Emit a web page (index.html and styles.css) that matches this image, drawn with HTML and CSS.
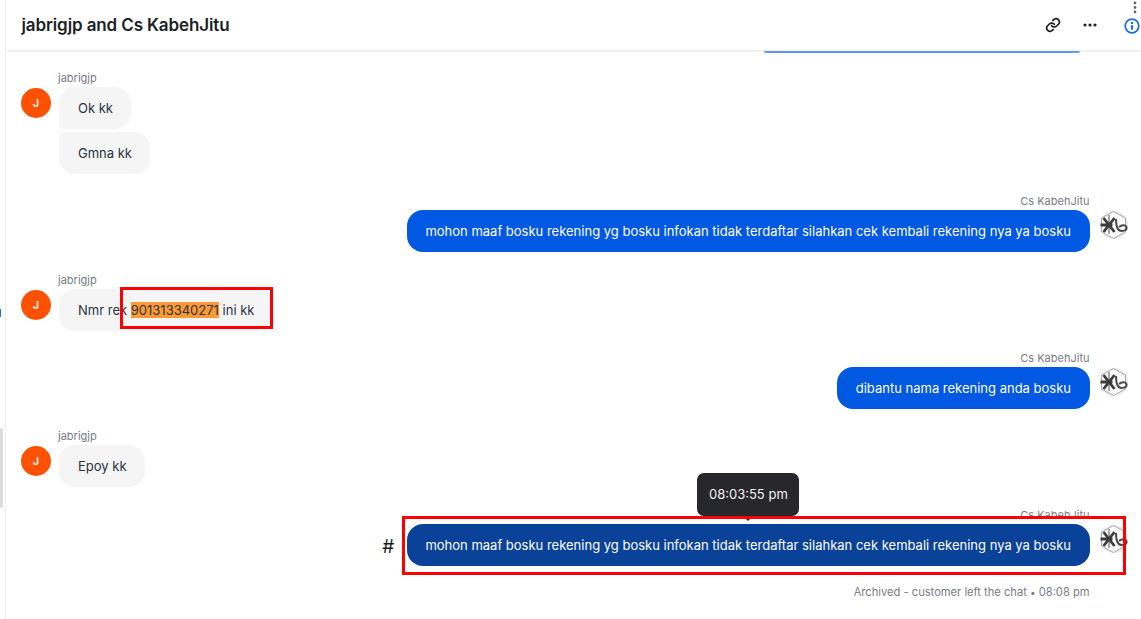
FILE: index.html
```html
<!DOCTYPE html>
<html lang="en">
<head>
<meta charset="utf-8">
<title>Conversation</title>
<link rel="stylesheet" href="styles.css">
</head>
<body>
<svg class="defs" width="0" height="0" aria-hidden="true">
  <symbol id="kb" viewBox="0 0 30 30">
    <circle cx="15" cy="15" r="14" fill="#ececec"/>
    <path d="M14.500 1.500 26.500 8v14l-12 6.500L2.500 22V8z" fill="#fbfbfb" stroke="#a8a8a8" stroke-width="1"/>
    <path d="M10 5v19" fill="none" stroke="#888" stroke-width="1.500"/>
    <path d="M4.500 8l11 14M15.500 8l-11 14M1.500 15h12" fill="none" stroke="#3c3c3c" stroke-width="2.800"/>
    <path d="M17 9c0 7 1 12 5.500 12s5.500-1.800 5-3.800-4-3-7.500-.2" fill="none" stroke="#4a4a4a" stroke-width="2"/>
  </symbol>
</svg>
<div class="app">
  <div class="rail"><i class="rail-tick"></i><i class="rail-thumb"></i></div>
  <main class="chat">
    <header class="topbar">
      <h1 class="title">jabrigjp and Cs KabehJitu</h1>
      <div class="actions">
        <svg class="icon-link" viewBox="0 0 24 24" fill="none" stroke="#222" stroke-width="2.600" stroke-linecap="round" stroke-linejoin="round"><path d="M10 13a5 5 0 0 0 7.500.5l3-3a5 5 0 0 0-7-7l-1.700 1.700"/><path d="M14 11a5 5 0 0 0-7.500-.5l-3 3a5 5 0 0 0 7 7l1.700-1.700"/></svg>
        <svg class="icon-more" viewBox="0 0 14 4" fill="#222"><circle cx="2" cy="2" r="1.600"/><circle cx="7" cy="2" r="1.600"/><circle cx="12" cy="2" r="1.600"/></svg>
        <div class="info-col">
          <svg class="icon-kebab" viewBox="0 0 4 12" fill="#666"><circle cx="2" cy="1.500" r="1.400"/><circle cx="2" cy="6" r="1.400"/><circle cx="2" cy="10.500" r="1.400"/></svg>
          <svg class="icon-info" viewBox="0 0 16 16" fill="none"><circle cx="8" cy="8" r="6.800" stroke="#1a6fe0" stroke-width="1.700"/><circle cx="8" cy="4.900" r="1.200" fill="#1a6fe0"/><path d="M8 7.200v4.500" stroke="#1a6fe0" stroke-width="2.100"/></svg>
        </div>
      </div>
    </header>
    <section class="thread">
      <div class="prev-bubble"></div>

      <article class="msg in first">
        <div class="avatar">J</div>
        <div class="stack">
          <div class="name">jabrigjp</div>
          <div class="bubble group-top">Ok kk</div>
          <div class="bubble group-end">Gmna kk</div>
        </div>
      </article>

      <article class="msg out gap-s">
        <div class="stack">
          <div class="name">Cs KabehJitu</div>
          <div class="bubble">mohon maaf bosku rekening yg bosku infokan tidak terdaftar silahkan cek kembali rekening nya ya bosku</div>
        </div>
        <svg class="logo"><use href="#kb"/></svg>
      </article>

      <article class="msg in gap-l">
        <div class="avatar">J</div>
        <div class="stack">
          <div class="name">jabrigjp</div>
          <div class="bubble">Nmr rek <mark class="hl">901313340271</mark> ini kk</div>
        </div>
      </article>

      <article class="msg out gap-s">
        <div class="stack">
          <div class="name">Cs KabehJitu</div>
          <div class="bubble">dibantu nama rekening anda bosku</div>
        </div>
        <svg class="logo"><use href="#kb"/></svg>
      </article>

      <article class="msg in gap-s">
        <div class="avatar">J</div>
        <div class="stack">
          <div class="name">jabrigjp</div>
          <div class="bubble">Epoy kk</div>
        </div>
      </article>

      <article class="msg out gap-l">
        <span class="hash">#</span>
        <div class="stack">
          <div class="name">Cs KabehJitu</div>
          <div class="bubble hovered">mohon maaf bosku rekening yg bosku infokan tidak terdaftar silahkan cek kembali rekening nya ya bosku
            <div class="tooltip">08:03:55 pm</div>
          </div>
          <div class="status">Archived - customer left the chat <span class="dot">•</span> 08:08 pm</div>
        </div>
        <svg class="logo"><use href="#kb"/></svg>
      </article>
    </section>
  </main>
  <div class="mark-box mark-one"></div>
  <div class="mark-box mark-two"></div>
</div>
</body>
</html>
```
FILE: styles.css
```css
* { box-sizing: border-box; }
html, body { margin: 0; height: 100%; overflow: hidden; background: #fff; }
body { font-family: Inter, "Liberation Sans", sans-serif; color: #1f2933; }
.defs { position: absolute; }
.app { position: relative; display: flex; width: 1141px; height: 619px; overflow: hidden; }

.rail { position: relative; flex: 0 0 6px; border-right: 1px solid #efefef; }
.rail-tick { position: absolute; left: 0; top: 309px; width: 1px; height: 8px; background: #1a6fe0; }
.rail-thumb { position: absolute; left: 0; top: 428px; width: 3px; height: 80px; background: #dcdcdc; border-radius: 0 3px 3px 0; }

.chat { flex: 1; min-width: 0; display: flex; flex-direction: column; }
.topbar { flex: 0 0 50px; display: flex; align-items: center; justify-content: space-between; padding-left: 15.5px; border-bottom: 2px solid #f1f1f1; }
.title { margin: 0; font-size: 17px; line-height: 22px; font-weight: 600; color: #1b1f27; letter-spacing: -0.12px; }
.actions { display: flex; align-items: center; }
.icon-link { width: 16px; height: 16px; margin-right: 22px; }
.icon-more { width: 14px; height: 4px; margin-right: 27px; }
.info-col { display: flex; flex-direction: column; align-items: flex-start; width: 16px; height: 50px; margin-right: 1px; padding-top: 1px; }
.icon-kebab { width: 4px; height: 13px; margin-left: 9px; }
.icon-info { width: 16px; height: 16px; margin-top: 4px; }

.thread { flex: 1; display: flex; flex-direction: column; padding: 0 12.5px 0 15px; margin-top: -1px; }
.prev-bubble { align-self: flex-end; width: 316px; height: 2px; margin-right: 48.500px; background: #5f98ee; border-radius: 0 0 8px 8px; }

.msg { display: flex; align-items: flex-start; }
.msg.first { margin-top: 19px; }
.msg.gap-s { margin-top: 21px; }
.msg.gap-l { margin-top: 22px; }
.msg.out { justify-content: flex-end; }

.stack { display: flex; flex-direction: column; align-items: flex-start; gap: 3px; }
.name { font-size: 11px; line-height: 13px; margin: 0 0 -1px -1px; color: #767c86; }
.out .stack { align-items: flex-end; }
.out .name { margin-right: 0; }

.avatar { flex: 0 0 30px; width: 30px; height: 30px; margin: 16px 8px 0 0; border-radius: 50%; background: #ff5100; color: #fff; font-size: 11px; font-weight: 600; display: flex; align-items: center; justify-content: center; }
.logo { flex: 0 0 30px; width: 30px; height: 30px; margin: 15px 0 0 9px; }

.bubble { position: relative; padding: 12px 18.500px; font-size: 13px; line-height: 18px; border-radius: 16px; background: #f5f5f5; color: #2a3342; }
.in .bubble { padding: 12px 18px 12px 19px; }
.bubble.group-top { border-bottom-left-radius: 4px; }
.bubble.group-end { border-top-left-radius: 4px; }
.out .bubble { background: #0058e3; color: #fff; }
.out .bubble.hovered { background: #0a429a; }

.hl { background: #ff9933; color: #2a3342; }
.hash { font-size: 19px; font-weight: 400; line-height: 24px; margin: 26px 12.500px 0 0; color: #1c1c1c; }

.tooltip { position: absolute; left: 290.500px; top: -51px; width: 102px; height: 43px; line-height: 43px; text-align: center; font-size: 13px; border-radius: 7px; background: #27272c; color: #f2f2f2; }
.tooltip::after { content: ""; position: absolute; left: 46px; bottom: -5px; border: 5px solid transparent; border-top-color: #27272c; border-bottom-width: 0; }

.status { margin-top: 16px; font-size: 11.150px; line-height: 14px; color: #767c86; }
.dot { font-size: 10px; }

.mark-box { position: absolute; border: 3px solid #f00; pointer-events: none; }
.mark-one { left: 120px; top: 287px; width: 153px; height: 42px; }
.mark-two { left: 401.500px; top: 516px; width: 724.500px; height: 59px; }
```
